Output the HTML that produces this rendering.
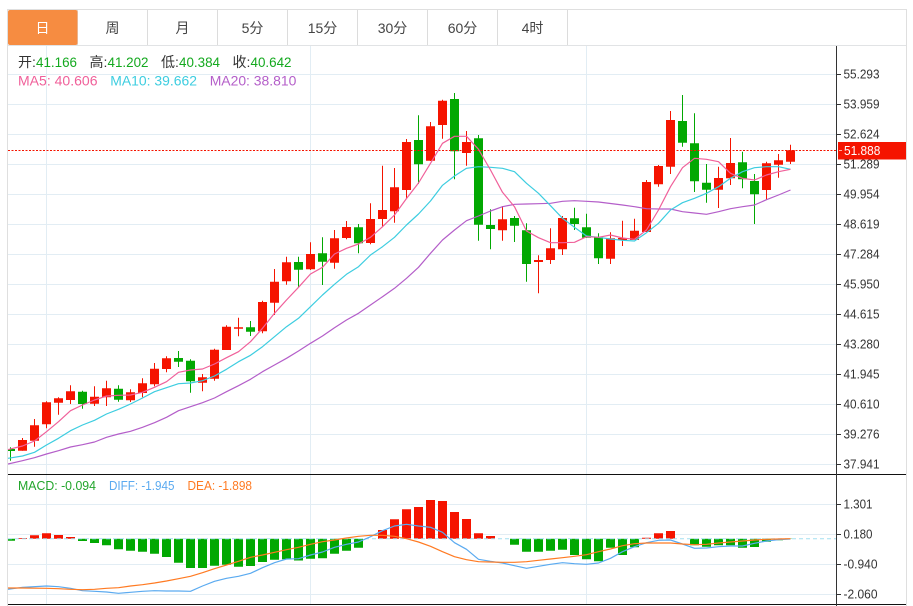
<!DOCTYPE html>
<html><head><meta charset="utf-8"><style>
html,body{margin:0;padding:0;background:#fff;width:913px;height:606px;overflow:hidden}
svg{display:block;font-family:"Liberation Sans","Noto Sans CJK SC",sans-serif}
</style></head><body>
<svg width="913" height="606" viewBox="0 0 913 606" xmlns="http://www.w3.org/2000/svg">
<defs><clipPath id="c"><rect x="8" y="46" width="828" height="560"/></clipPath></defs>
<rect width="913" height="606" fill="#fff"/>
<!-- frame -->
<path d="M7.5 606V9.5H906.5V606" fill="none" stroke="#dfdfdf"/>
<path d="M8 45.5H906" stroke="#e1e3e5"/>
<path d="M77.5 10V45M147.5 10V45M217.5 10V45M287.5 10V45M357.5 10V45M427.5 10V45M497.5 10V45M567.5 10V45" stroke="#dcdcdc"/>
<rect x="8" y="10" width="69.5" height="35" rx="2" fill="#f68c41"/>
<g font-size="14" text-anchor="middle" fill="#444">
<text x="42.5" y="33" fill="#fff">日</text>
<text x="112.5" y="33">周</text>
<text x="182.5" y="33">月</text>
<text x="252.5" y="33">5分</text>
<text x="322.5" y="33">15分</text>
<text x="392.5" y="33">30分</text>
<text x="462.5" y="33">60分</text>
<text x="532.5" y="33">4时</text>
</g>
<!-- grid -->
<path d="M8 74.5H836M8 104.5H836M8 134.5H836M8 164.5H836M8 194.5H836M8 224.5H836M8 254.5H836M8 284.5H836M8 314.5H836M8 344.5H836M8 374.5H836M8 404.5H836M8 434.5H836M8 464.5H836M8 504.5H836M8 534.5H836M8 564.5H836M8 594.5H836M46.5 46V604M310.5 46V604M586.5 46V604" stroke="#e2edf4" fill="none"/>
<g clip-path="url(#c)">
<!-- wicks -->
<path stroke="#f51400" fill="none" d="M22.5 438V450.7M34.5 419V446.7M46.5 401.3V428.3M58.5 397.3V414.7M70.5 385.3V404M94.5 386.3V406M106.5 380.7V406M130.5 389.3V402M142.5 378.3V397.3M154.5 363V386.3M166.5 356.3V372.3M202.5 374V391.3M214.5 348.7V380.7M226.5 325.3V350M238.5 317.7V336.3M262.5 300.7V333.3M274.5 269V315M286.5 256.7V284.7M310.5 242.3V270M334.5 230V268.7M346.5 221V239.3M370.5 203.3V244.3M382.5 165.7V227.3M394.5 168V222.7M406.5 139V198.3M430.5 122V161M442.5 99.7V138.7M466.5 131V165.7M502.5 206V240.7M538.5 255.3V293.3M550.5 228.3V264M562.5 216V255M610.5 232.3V264M622.5 220.7V246M634.5 218.7V240M646.5 180V232M658.5 165V186.7M670.5 111V174M718.5 166.7V208M730.5 138V185M766.5 161.7V200M778.5 154V177.7M790.5 144.7V164"/>
<path stroke="#02a802" fill="none" d="M10.5 447.3V460.7M82.5 390.7V408.7M118.5 385.3V401.7M178.5 351V367M190.5 359.3V392.7M250.5 321V336M298.5 256.7V287.3M322.5 237.3V285M358.5 224V253.3M418.5 115.3V184M454.5 93V179.3M478.5 135V240.7M490.5 209.3V249.3M514.5 216V242M526.5 223.3V281.7M574.5 207.7V230M586.5 213.7V237.7M598.5 233.3V264M682.5 95V146.7M694.5 113.3V192M706.5 164V202.7M742.5 151.7V188.3M754.5 174V224"/>
<!-- bodies -->
<path stroke="#f51400" stroke-width="9" fill="none" d="M22.5 440V450.7M34.5 425.3V440.7M46.5 402.3V424.3M58.5 398.3V402.7M70.5 391.3V400M94.5 396.7V403.7M106.5 388.3V397.3M130.5 392.3V400.3M142.5 383.3V393M154.5 368.7V384.3M166.5 358.3V369M202.5 377.3V382.7M214.5 349.7V378.7M226.5 326.7V350M238.5 327.3V328.7M262.5 302V331.3M274.5 281.7V302.7M286.5 262.3V281.3M310.5 254V269.3M334.5 238.3V262.7M346.5 227V238M370.5 219V243M382.5 210V219M394.5 187.3V211.3M406.5 142V190M430.5 126.3V160.7M442.5 100.7V125M466.5 142V153M502.5 219.3V230.3M538.5 260V262M550.5 248.3V260M562.5 218V249.3M610.5 238.3V258.7M622.5 238V240M634.5 230.7V240M646.5 182V232M658.5 166V184.3M670.5 120V166.7M718.5 178V189.7M730.5 163V178.3M766.5 163.3V190M778.5 160.3V164.7M790.5 150.3V161.7"/>
<path stroke="#02a802" stroke-width="9" fill="none" d="M10.5 449V451M82.5 391.7V404M118.5 388.7V399.7M178.5 358V361.7M190.5 360.7V381.3M250.5 327.3V331.7M298.5 262V269.7M322.5 253.3V261.7M358.5 227.3V243.3M418.5 140V164.3M454.5 99V151.3M478.5 138.3V224.7M490.5 225V229M514.5 218V225.7M526.5 230.3V264M574.5 218.3V224M586.5 227.3V237.7M598.5 237.3V258.3M682.5 121V142.7M694.5 143.3V181.3M706.5 182.7V189.7M742.5 162.3V179.3M754.5 181V194.3"/>
<!-- price line -->
<path d="M8 150.5H836" stroke="#f51400" stroke-dasharray="2 1.5" fill="none"/>
<!-- MA lines -->
<g fill="none" stroke-width="1.2" stroke-linejoin="round">
<polyline stroke="#b45ec9" points="8,464 22.5,460.7 34.5,457.7 46.5,454 58.5,450.7 70.5,447 82.5,444.7 94.5,442 106.5,437.3 118.5,434 130.5,431.3 142.5,427.3 154.5,422.7 166.5,417.3 178.5,410.7 190.5,406.7 202.5,402.7 214.5,398 226.5,391.7 238.5,385.7 250.5,379.3 262.5,371.7 274.5,365 286.5,358.3 298.5,351 310.5,343.3 322.5,336 334.5,327.7 346.5,320 358.5,313.3 370.5,305 382.5,296.7 394.5,288.3 406.5,278.3 418.5,267.3 430.5,253.3 442.5,240 454.5,230 466.5,220.7 478.5,216 490.5,211 502.5,206.7 514.5,204.3 526.5,204 538.5,203.7 550.5,203.3 562.5,201.3 574.5,200.7 586.5,201.3 598.5,202 610.5,203.5 622.5,205 634.5,206.7 646.5,208.7 658.5,209 670.5,209 682.5,211.7 694.5,213 706.5,214.3 718.5,211.7 730.5,208.7 742.5,206.7 754.5,205 766.5,199.7 778.5,195 790.5,190"/>
<polyline stroke="#3dcde0" points="8,458.3 22.5,456 34.5,452.3 46.5,445 58.5,438.3 70.5,430.7 82.5,425 94.5,420.3 106.5,414 118.5,409.3 130.5,404 142.5,398 154.5,391.7 166.5,387.7 178.5,383.7 190.5,383 202.5,380.7 214.5,376 226.5,369.3 238.5,361.7 250.5,355.3 262.5,346.7 274.5,336.7 286.5,326.7 298.5,318.3 310.5,306.7 322.5,295 334.5,284.3 346.5,274.3 358.5,266.7 370.5,255 382.5,246.7 394.5,237.3 406.5,225 418.5,214 430.5,201 442.5,185.3 454.5,176 466.5,168.3 478.5,166.7 490.5,167.3 502.5,168.3 514.5,171.7 526.5,183.3 538.5,193.3 550.5,205.7 562.5,218.3 574.5,227.3 586.5,236 598.5,237.3 610.5,239 622.5,240.3 634.5,241 646.5,232.7 658.5,223.3 670.5,210 682.5,202.7 694.5,198.3 706.5,193.3 718.5,186.7 730.5,178.3 742.5,171.7 754.5,167.7 766.5,166.7 778.5,166.7 790.5,169.3"/>
<polyline stroke="#f0609a" points="8,449.6 22.5,446 34.5,441 46.5,431.7 58.5,421.7 70.5,410.7 82.5,405 94.5,400 106.5,396 118.5,395.3 130.5,395 142.5,392.3 154.5,387.3 166.5,381.7 178.5,372.3 190.5,370 202.5,369 214.5,364 226.5,357.7 238.5,351.7 250.5,341.7 262.5,328.3 274.5,313.3 286.5,300 298.5,287.3 310.5,274 322.5,267.3 334.5,254 346.5,248.3 358.5,244 370.5,237.3 382.5,226.7 394.5,215 406.5,198.5 418.5,183 430.5,163.3 442.5,143.3 454.5,136.3 466.5,136.3 478.5,149.3 490.5,170 502.5,192.3 514.5,206.7 526.5,231 538.5,237.7 550.5,242.7 562.5,242.7 574.5,242.3 586.5,236.7 598.5,237.3 610.5,235 622.5,238 634.5,239.3 646.5,230 658.5,210 670.5,186.7 682.5,167.7 694.5,158.3 706.5,159.3 718.5,161.7 730.5,173.3 742.5,178.3 754.5,180 766.5,175 778.5,171.7 790.5,169.3"/>
</g>
<!-- MACD bars -->
<path stroke="#f51400" stroke-width="9" fill="none" d="M22.5 538.7V538M34.5 538.7V535.3M46.5 538.7V533.3M58.5 538.7V535M70.5 538.7V537M382.5 538.7V530M394.5 538.7V519.3M406.5 538.7V509.3M418.5 538.7V507M430.5 538.7V500M442.5 538.7V501M454.5 538.7V512M466.5 538.7V519M478.5 538.7V533.3M490.5 538.7V536M646.5 538.7V537.7M658.5 538.7V533.3M670.5 538.7V531"/>
<path stroke="#02a802" stroke-width="9" fill="none" d="M10.5 538.7V540.7M82.5 538.7V541M94.5 538.7V543M106.5 538.7V545.3M118.5 538.7V549.3M130.5 538.7V550.7M142.5 538.7V551.7M154.5 538.7V553.7M166.5 538.7V557M178.5 538.7V562.7M190.5 538.7V568M202.5 538.7V568M214.5 538.7V565.7M226.5 538.7V564.7M238.5 538.7V566.7M250.5 538.7V566M262.5 538.7V562M274.5 538.7V559.7M286.5 538.7V559.3M298.5 538.7V560.5M310.5 538.7V558.7M322.5 538.7V558.3M334.5 538.7V553.7M346.5 538.7V550.7M358.5 538.7V547.7M514.5 538.7V544.7M526.5 538.7V551.7M538.5 538.7V551.7M550.5 538.7V550.7M562.5 538.7V549.7M574.5 538.7V555M586.5 538.7V559.3M598.5 538.7V561.3M610.5 538.7V547.7M622.5 538.7V555M634.5 538.7V547.3M694.5 538.7V545.3M706.5 538.7V546.7M718.5 538.7V545.3M730.5 538.7V545.3M742.5 538.7V547.7M754.5 538.7V547M766.5 538.7V541.7M778.5 538.7V540.3M790.5 538.7V539"/>
<path d="M8 538.7H836" stroke="#a4dff0" stroke-dasharray="4 3" fill="none"/>
<g fill="none" stroke-width="1.2" stroke-linejoin="round">
<polyline stroke="#5aaaf0" points="8,589.3 22.5,587.3 46.5,586 58.5,586.7 70.5,588.3 82.5,590.7 94.5,591.3 106.5,592 118.5,593.3 130.5,592.3 142.5,591.3 154.5,590.7 166.5,591 178.5,591 190.5,591.3 202.5,586 214.5,581.3 226.5,578.3 238.5,576.3 250.5,573.3 262.5,567.7 274.5,562.7 286.5,559 298.5,558.7 310.5,555 322.5,552 334.5,547.3 346.5,544.3 358.5,542 370.5,536.7 382.5,530.7 394.5,526 406.5,524.3 418.5,526 430.5,527.3 442.5,532.3 454.5,542.7 466.5,549.3 478.5,559.3 490.5,561.3 502.5,563 514.5,565.7 526.5,568.3 538.5,566.3 550.5,564.3 562.5,562.7 574.5,563.7 586.5,564.3 598.5,563 610.5,558.3 622.5,551.7 634.5,546.7 646.5,542.7 658.5,540.3 670.5,540 682.5,544 694.5,548.3 706.5,548 718.5,546.7 730.5,546 742.5,546 754.5,543.3 766.5,541 778.5,539.7 790.5,539"/>
<polyline stroke="#ff7a22" points="8,588 22.5,588 46.5,588.3 58.5,588.7 70.5,589.3 82.5,589.7 94.5,589.3 106.5,588.3 118.5,587.7 130.5,586 142.5,584.7 154.5,583 166.5,581 178.5,578.7 190.5,576.3 202.5,572.7 214.5,568.7 226.5,565 238.5,561.3 250.5,557.3 262.5,555 274.5,552.3 286.5,549.7 298.5,547.3 310.5,544.3 322.5,541.7 334.5,540 346.5,538 358.5,536.3 370.5,535.3 382.5,535.3 394.5,536.3 406.5,538.7 418.5,542 430.5,546.3 442.5,551.7 454.5,556.7 466.5,559.7 478.5,561.7 490.5,562 502.5,562.3 514.5,562.3 526.5,561.7 538.5,560.3 550.5,559 562.5,557.7 574.5,556.3 586.5,554.7 598.5,551.7 610.5,549 622.5,545.7 634.5,543.7 646.5,543 658.5,543 670.5,543 682.5,544 694.5,544.7 706.5,544.3 718.5,543 730.5,542 742.5,541 754.5,540 766.5,539.3 778.5,539 790.5,538.7"/>
</g>
</g>
<!-- separators and axis -->
<path d="M8 474.5H906M8 604.5H906" stroke="#111" fill="none"/>
<path d="M836.5 46V606" stroke="#333" fill="none"/>
<path d="M837 74.5h4M837 104.5h4M837 134.5h4M837 164.5h4M837 194.5h4M837 224.5h4M837 254.5h4M837 284.5h4M837 314.5h4M837 344.5h4M837 374.5h4M837 404.5h4M837 434.5h4M837 464.5h4M837 504.5h4M837 534.5h4M837 564.5h4M837 594.5h4" stroke="#333" fill="none"/>
<g font-size="13" fill="#333" lengthAdjust="spacingAndGlyphs">
<text x="843.5" y="78.7" textLength="36" lengthAdjust="spacingAndGlyphs">55.293</text>
<text x="843.5" y="108.7" textLength="36" lengthAdjust="spacingAndGlyphs">53.959</text>
<text x="843.5" y="138.7" textLength="36" lengthAdjust="spacingAndGlyphs">52.624</text>
<text x="843.5" y="168.7" textLength="36" lengthAdjust="spacingAndGlyphs">51.289</text>
<text x="843.5" y="198.7" textLength="36" lengthAdjust="spacingAndGlyphs">49.954</text>
<text x="843.5" y="228.7" textLength="36" lengthAdjust="spacingAndGlyphs">48.619</text>
<text x="843.5" y="258.7" textLength="36" lengthAdjust="spacingAndGlyphs">47.284</text>
<text x="843.5" y="288.7" textLength="36" lengthAdjust="spacingAndGlyphs">45.950</text>
<text x="843.5" y="318.7" textLength="36" lengthAdjust="spacingAndGlyphs">44.615</text>
<text x="843.5" y="348.7" textLength="36" lengthAdjust="spacingAndGlyphs">43.280</text>
<text x="843.5" y="378.7" textLength="36" lengthAdjust="spacingAndGlyphs">41.945</text>
<text x="843.5" y="408.7" textLength="36" lengthAdjust="spacingAndGlyphs">40.610</text>
<text x="843.5" y="438.7" textLength="36" lengthAdjust="spacingAndGlyphs">39.276</text>
<text x="843.5" y="468.7" textLength="36" lengthAdjust="spacingAndGlyphs">37.941</text>
<text x="843.5" y="508.7" textLength="29" lengthAdjust="spacingAndGlyphs">1.301</text>
<text x="843.5" y="538.7" textLength="29" lengthAdjust="spacingAndGlyphs">0.180</text>
<text x="843.5" y="568.7" textLength="34" lengthAdjust="spacingAndGlyphs">-0.940</text>
<text x="843.5" y="598.7" textLength="34" lengthAdjust="spacingAndGlyphs">-2.060</text>
</g>
<rect x="838" y="142" width="68" height="17.5" fill="#f51400"/>
<path d="M839 150.5h3" stroke="#ffb0a0" fill="none"/>
<text x="844" y="155" font-size="13" fill="#fff" textLength="36.3" lengthAdjust="spacingAndGlyphs">51.888</text>
<!-- legends -->
<g font-size="14">
<text x="18" y="67" fill="#333">开:</text><text x="36" y="67" fill="#14a91f" textLength="41" lengthAdjust="spacingAndGlyphs">41.166</text>
<text x="89.5" y="67" fill="#333">高:</text><text x="107.5" y="67" fill="#14a91f" textLength="41" lengthAdjust="spacingAndGlyphs">41.202</text>
<text x="161" y="67" fill="#333">低:</text><text x="179" y="67" fill="#14a91f" textLength="41" lengthAdjust="spacingAndGlyphs">40.384</text>
<text x="232.5" y="67" fill="#333">收:</text><text x="250.5" y="67" fill="#14a91f" textLength="41" lengthAdjust="spacingAndGlyphs">40.642</text>
<text x="18" y="85.3" fill="#f0609a" textLength="79.5" lengthAdjust="spacingAndGlyphs">MA5: 40.606</text>
<text x="110.3" y="85.3" fill="#3dcde0" textLength="86.7" lengthAdjust="spacingAndGlyphs">MA10: 39.662</text>
<text x="209.7" y="85.3" fill="#b45ec9" textLength="86.7" lengthAdjust="spacingAndGlyphs">MA20: 38.810</text>
<text x="18" y="490" fill="#22a52b" font-size="13" textLength="78" lengthAdjust="spacingAndGlyphs">MACD: -0.094</text>
<text x="109" y="490" fill="#5aaaf0" font-size="13" textLength="65.5" lengthAdjust="spacingAndGlyphs">DIFF: -1.945</text>
<text x="187.5" y="490" fill="#ff7a22" font-size="13" textLength="64.5" lengthAdjust="spacingAndGlyphs">DEA: -1.898</text>
</g>
</svg>
</body></html>
